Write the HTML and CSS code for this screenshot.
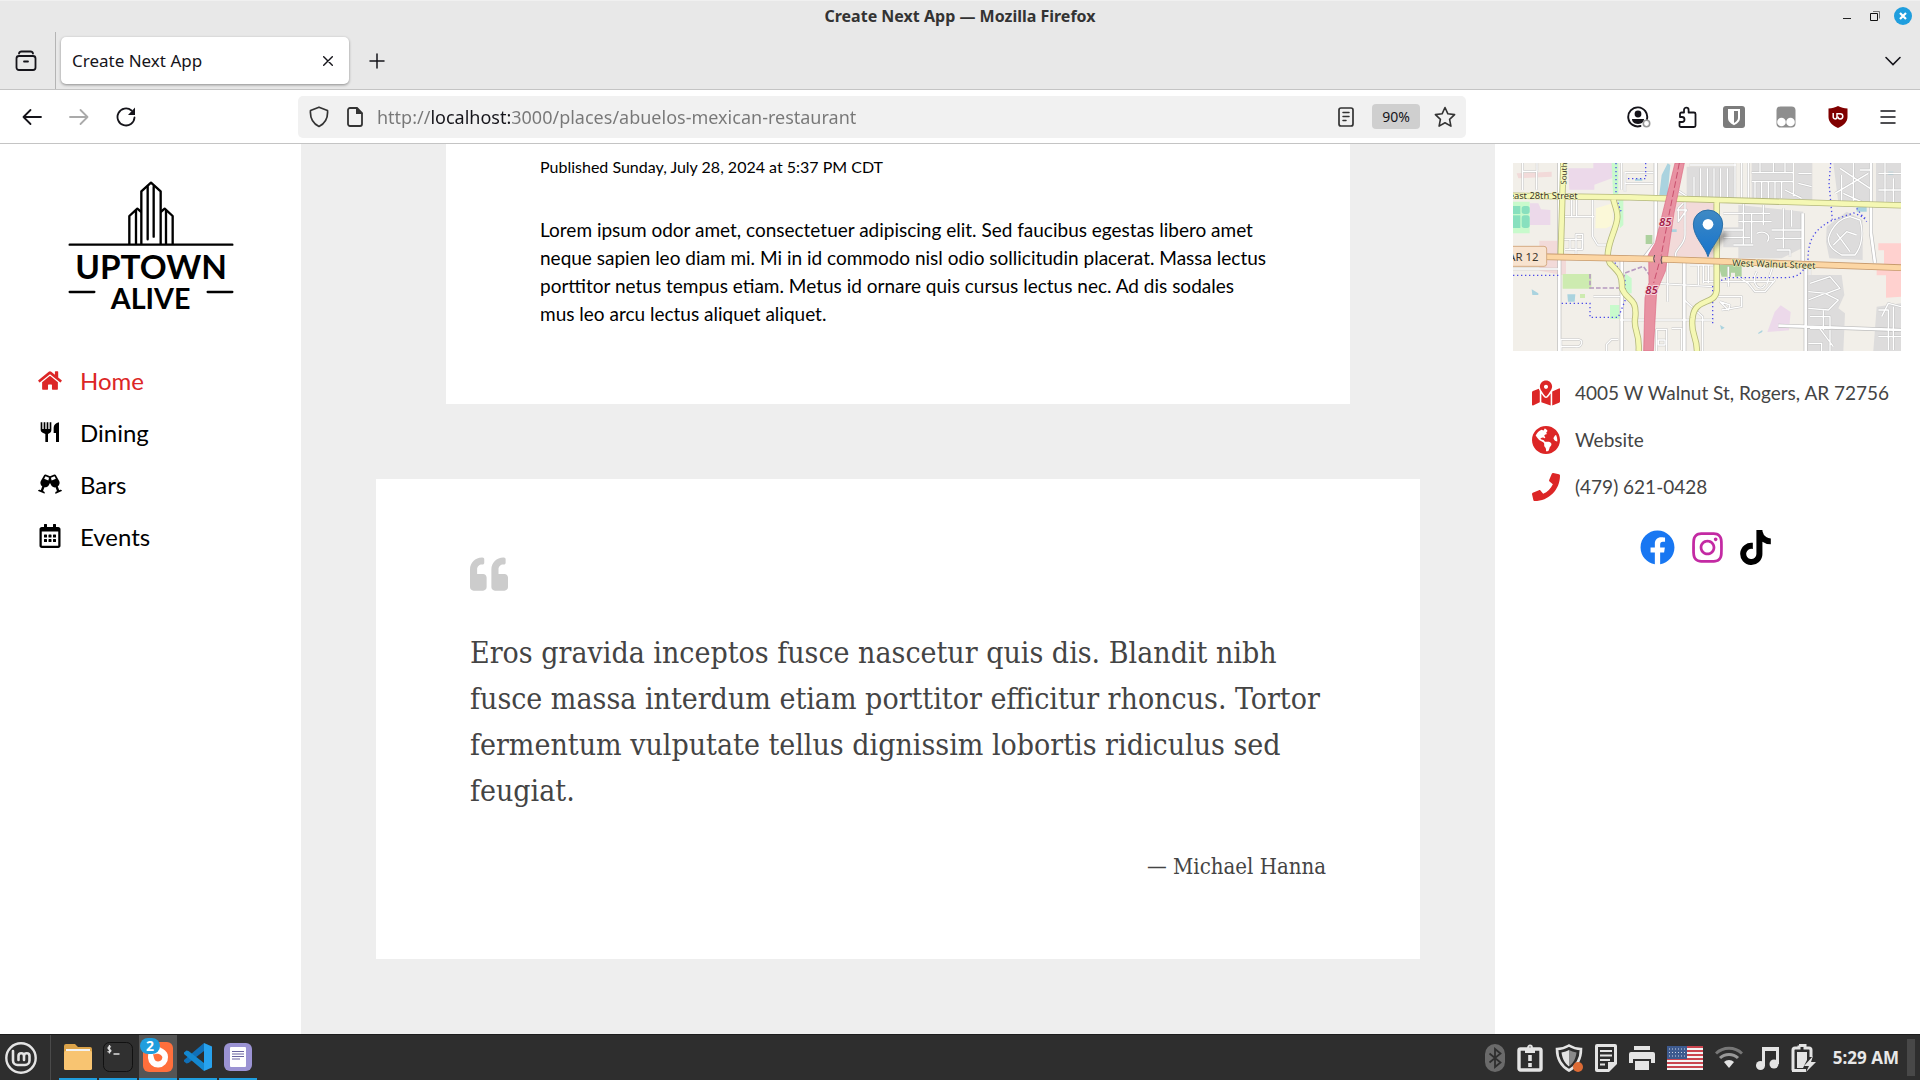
FILE: index.html
```html
<!DOCTYPE html>
<html lang="en">
<head>
<meta charset="utf-8">
<meta name="viewport" content="width=device-width, initial-scale=1">
<title>Create Next App</title>
<link rel="stylesheet" href="styles.css">
</head>
<body>
<header class="chrome">
  <div class="titlebar">
    <span class="titlebar-text">Create Next App — Mozilla Firefox</span>
    <div class="window-buttons">
      <button aria-label="Minimize"><svg width="18" height="18" viewBox="0 0 18 18"><path d="M5 11.500h8" stroke="#222"/></svg></button>
      <button aria-label="Restore"><svg width="18" height="18" viewBox="0 0 18 18" fill="none"><path d="M7 4.500h6.500v7" stroke="#777"/><path d="M4.500 6.500h7v7h-7z" stroke="#111"/></svg></button>
      <button aria-label="Close"><svg width="18" height="18" viewBox="0 0 18 18"><circle cx="9" cy="9" r="9" fill="#1f9ede"/><path d="M6 6l6 6M12 6l-6 6" stroke="#fff" stroke-width="2.200"/></svg></button>
    </div>
  </div>
  <div class="tabbar">
    <button class="recent" aria-label="Recent browsing"><svg width="22" height="22" viewBox="0 0 22 22" fill="none" stroke="#15141a" stroke-width="1.800" stroke-linecap="round"><rect x="1.500" y="6" width="19" height="14" rx="2.500"/><path d="M4 3.500c.3-1.500 1-2 2.500-2h9c1.500 0 2.200.5 2.500 2M9 11.500h4"/></svg></button>
    <div class="tab">
      <span>Create Next App</span>
      <button aria-label="Close tab"><svg width="10" height="10" viewBox="0 0 10 10"><path d="M.7.7l8.600 8.600M9.300.7L.7 9.300" stroke="#15141a" stroke-width="1.400" stroke-linecap="round"/></svg></button>
    </div>
    <button class="new-tab" aria-label="New tab"><svg width="16" height="16" viewBox="0 0 16 16"><path d="M8 1v14M1 8h14" stroke="#15141a" stroke-width="1.500" stroke-linecap="round"/></svg></button>
    <button class="all-tabs" aria-label="List all tabs"><svg width="18" height="10" viewBox="0 0 18 10" fill="none"><path d="M2 1.500l7 7 7-7" stroke="#15141a" stroke-width="1.600" stroke-linecap="round"/></svg></button>
  </div>
  <div class="toolbar">
    <div class="history">
      <button aria-label="Back"><svg width="20" height="18" viewBox="0 0 20 18" fill="none" stroke="#15141a" stroke-width="1.800" stroke-linecap="round" stroke-linejoin="round"><path d="M19 9H1.500M8.500 2l-7 7 7 7"/></svg></button>
      <button aria-label="Forward" disabled><svg width="20" height="18" viewBox="0 0 20 18" fill="none" stroke="#aaa" stroke-width="1.800" stroke-linecap="round" stroke-linejoin="round"><path d="M1 9h17.500M11.500 2l7 7-7 7"/></svg></button>
      <button aria-label="Reload"><svg width="20" height="20" viewBox="0 0 20 20" fill="none"><path d="M18.500 10.500a8.500 8.500 0 1 1-3-7" stroke="#15141a" stroke-width="1.800" stroke-linecap="round"/><path d="M19 .5v7.500h-7z" fill="#15141a"/></svg></button>
    </div>
    <div class="urlbar">
      <svg width="20" height="22" viewBox="0 0 20 22" fill="none"><path d="M10 1.200l8.500 3.300c.5 6-1.500 12.500-8.500 16C3 17 1 10.500 1.500 4.500z" stroke="#333" stroke-width="1.700" stroke-linejoin="round"/></svg>
      <svg width="16" height="20" viewBox="0 0 16 20"><path d="M3 1h7l5 5v11a2 2 0 0 1-2 2H3a2 2 0 0 1-2-2V3a2 2 0 0 1 2-2z" fill="none" stroke="#333" stroke-width="1.800"/><path d="M9 0l7 7H9z" fill="#333"/></svg>
      <input class="url" type="text" aria-label="Address" value="http://localhost:3000/places/abuelos-mexican-restaurant">
      <button aria-label="Reader view"><svg width="16" height="20" viewBox="0 0 16 20" fill="none" stroke="#333" stroke-linecap="round"><rect x="1" y="1" width="14" height="18" rx="2" stroke-width="1.700"/><path d="M5 5.500h6M5 9.500h6M5 13.500h3" stroke-width="1.500"/></svg></button>
      <button class="zoom-level">90%</button>
      <button aria-label="Bookmark this page"><svg width="22" height="22" viewBox="0 0 22 22" fill="none"><path d="M11 1.500l2.900 6.300 6.700.8-5 4.700 1.300 6.800-5.900-3.400-5.900 3.400 1.300-6.800-5-4.700 6.700-.8z" stroke="#333" stroke-width="1.600" stroke-linejoin="round"/></svg></button>
    </div>
    <div class="extensions">
      <div class="toolbar-group">
        <button aria-label="Account"><svg width="24" height="22" viewBox="0 0 24 22"><path d="M13.500 20A9.500 9.500 0 1 1 20 13" fill="none" stroke="#15141a" stroke-width="1.900" stroke-linecap="round"/><circle cx="11" cy="8" r="3.400" fill="#15141a"/><path d="M5 13h12c0 2-1.500 5-6 5s-6-3-6-5z" fill="#15141a"/><circle cx="19.500" cy="17.500" r="3.200" fill="#fff" stroke="#999" stroke-width="1.600"/></svg></button>
        <button aria-label="Extensions"><svg width="20" height="22" viewBox="0 0 20 22" fill="none"><path d="M4.500 6.500H7V4a2.300 2.300 0 0 1 4.600 0v2.500H17a1.500 1.500 0 0 1 1.500 1.500v11.500A1.500 1.500 0 0 1 17 21H4a1.500 1.500 0 0 1-1.500-1.500V16H5a2 2 0 0 0 0-5H3V8a1.500 1.500 0 0 1 1.500-1.500z" stroke="#15141a" stroke-width="1.800" stroke-linejoin="round"/></svg></button>
        <button aria-label="Bitwarden"><svg width="22" height="22" viewBox="0 0 22 22"><rect width="22" height="22" rx="3" fill="#7c7c7c"/><path d="M5 3h12v9c0 3.500-3 5.700-6 7.200C8 17.700 5 15.500 5 12z" fill="#fff"/><path d="M11 5h4v7c0 2.200-1.800 3.700-4 5z" fill="#7c7c7c"/></svg></button>
      </div>
      <div class="toolbar-group addons">
        <button aria-label="Tampermonkey"><svg width="20" height="22" viewBox="0 0 20 22"><rect x=".5" y=".5" width="19" height="21" rx="4" fill="#8e8e8e"/><circle cx="5.500" cy="16" r="4.300" fill="#fff"/><circle cx="14.500" cy="16" r="4.300" fill="#fff"/></svg></button>
        <button aria-label="uBlock Origin"><svg width="20" height="22" viewBox="0 0 20 22"><path d="M10 0c3 1.800 6 2.300 9.500 2.500V11c0 5-4 8.500-9.500 11C4.500 19.500.5 16 .5 11V2.500C4 2.300 7 1.800 10 0z" fill="#800000"/><path d="M5.200 7v4a1.900 1.900 0 0 0 3.800 0V7" fill="none" stroke="#fff" stroke-width="1.500"/><path d="M9 7.700h3.200a2.600 2.600 0 0 1 0 5.200c-1.600 0-2.300-1-2.300-2.400" fill="none" stroke="#fff" stroke-width="1.500"/></svg></button>
        <button aria-label="Menu"><svg width="16" height="14" viewBox="0 0 16 14"><path d="M1 1h14M1 7h14M1 13h14" stroke="#15141a" stroke-width="1.500" stroke-linecap="round"/></svg></button>
      </div>
    </div>
  </div>
</header>

<div class="page">
  <aside class="sidebar">
    <svg class="logo" viewBox="80 60 504 390" role="img" aria-label="Uptown Alive">
      <g fill="none" stroke="#000" stroke-width="7" stroke-linejoin="round">
        <path d="M303 252V94l29-26 29 26v158"/>
        <path d="M322 80v158M340 80v150" stroke-linecap="round"/>
        <path d="M303 156l-12-10-24 22v84M287 152v100M361 156l12-10 24 22v84M377 152v100"/>
        <path d="M88 254h488M88 396h74M502 396h74" stroke-linecap="round"/>
      </g>
      <text class="logo-name" x="332" y="357" text-anchor="middle">UPTOWN</text>
      <text class="logo-sub" x="331" y="446" text-anchor="middle">ALIVE</text>
    </svg>
    <nav class="menu">
      <a class="active" href="#home"><svg width="24" height="21" viewBox="0 0 576 512"><path d="M280.370 148.260L96 300.110V464a16 16 0 0 0 16 16l112.060-.29a16 16 0 0 0 15.920-16V368a16 16 0 0 1 16-16h64a16 16 0 0 1 16 16v95.640a16 16 0 0 0 16 16.050L464 480a16 16 0 0 0 16-16V300L295.670 148.260a12.190 12.190 0 0 0-15.300 0zM571.600 251.470L488 182.560V44.050a12 12 0 0 0-12-12h-56a12 12 0 0 0-12 12v72.610L318.470 43a48 48 0 0 0-61 0L4.340 251.470a12 12 0 0 0-1.600 16.900l25.500 31A12 12 0 0 0 45.150 301l235.220-193.740a12.190 12.190 0 0 1 15.300 0L530.900 301a12 12 0 0 0 16.900-1.600l25.500-31a12 12 0 0 0-1.700-16.930z"/></svg>Home</a>
      <a href="#dining"><svg width="24" height="20" viewBox="114 221 72 60"><path d="M122 222h5v20h4v-20h5v20h4v-20h5v20h4v-20h5v24c0 6-4 9-10 11v23c0 2-8 2-8 0v-23c-6-2-14-5-14-11zM177 222v58c0 2-9 2-9 0v-26h-7v-16c0-8 6-14 16-16z"/></svg>Dining</a>
      <a href="#bars"><svg width="24" height="20" viewBox="0 0 640 512"><path d="M639.400 433.600c-8.400-20.400-31.800-30.100-52.200-21.600l-22.100 9.200-38.700-101.900c47.900-35 64.800-100.300 34.500-152.800L474.300 16c-8-13.900-25.100-19.700-40-13.600L320 49.800 205.700 2.400c-14.900-6.100-32-.3-40 13.600L79.100 166.500C48.900 219 65.700 284.300 113.600 319.200L74.900 421.100l-22.100-9.200c-20.400-8.500-43.700 1.200-52.200 21.600-1.700 4.100.2 8.800 4.300 10.500l162.300 67.400c4.100 1.700 8.700-.2 10.400-4.300 8.400-20.400-1.200-43.900-21.600-52.500l-22.100-9.200 38.700-101.800c5.100.4 10.100.7 15.100.7 40.400 0 78.700-20.600 99.300-56.300L320 232.200l33.200 57.500c20.600 35.700 59 56.300 99.300 56.300 5 0 10.100-.2 15.100-.7l38.700 101.800-22.100 9.200c-20.400 8.500-30.100 32-21.600 52.500 1.700 4.100 6.400 6 10.400 4.300L635.100 444c4-1.700 6-6.400 4.300-10.400zM275.900 162.100l-112.100-46.500 36.500-63.400 94.500 39.200-18.900 70.700zm88.200 0l-18.900-70.700 94.500-39.200 36.500 63.400-112.100 46.500z"/></svg>Bars</a>
      <a href="#events"><svg width="24" height="24" viewBox="0 0 448 512"><path d="M148 288h-40c-6.600 0-12-5.400-12-12v-40c0-6.600 5.400-12 12-12h40c6.600 0 12 5.400 12 12v40c0 6.600-5.400 12-12 12zm108-12v-40c0-6.600-5.400-12-12-12h-40c-6.600 0-12 5.400-12 12v40c0 6.600 5.400 12 12 12h40c6.600 0 12-5.400 12-12zm96 0v-40c0-6.600-5.400-12-12-12h-40c-6.600 0-12 5.400-12 12v40c0 6.600 5.400 12 12 12h40c6.600 0 12-5.400 12-12zm-96 96v-40c0-6.600-5.400-12-12-12h-40c-6.600 0-12 5.400-12 12v40c0 6.600 5.400 12 12 12h40c6.600 0 12-5.400 12-12zm-96 0v-40c0-6.600-5.400-12-12-12h-40c-6.600 0-12 5.400-12 12v40c0 6.600 5.400 12 12 12h40c6.600 0 12-5.400 12-12zm192 0v-40c0-6.600-5.400-12-12-12h-40c-6.600 0-12 5.400-12 12v40c0 6.600 5.400 12 12 12h40c6.600 0 12-5.400 12-12zm96-260v352c0 26.500-21.500 48-48 48H48c-26.500 0-48-21.500-48-48V112c0-26.500 21.500-48 48-48h48V12c0-6.600 5.400-12 12-12h40c6.600 0 12 5.400 12 12v52h128V12c0-6.600 5.400-12 12-12h40c6.600 0 12 5.400 12 12v52h48c26.500 0 48 21.500 48 48zm-48 346V160H48v298c0 3.300 2.700 6 6 6h340c3.300 0 6-2.700 6-6z"/></svg>Events</a>
    </nav>
  </aside>

  <main class="content">
    <article class="article">
      <p class="published">Published Sunday, July 28, 2024 at 5:37 PM CDT</p>
      <p>Lorem ipsum odor amet, consectetuer adipiscing elit. Sed faucibus egestas libero amet neque sapien leo diam mi. Mi in id commodo nisl odio sollicitudin placerat. Massa lectus porttitor netus tempus etiam. Metus id ornare quis cursus lectus nec. Ad dis sodales mus leo arcu lectus aliquet aliquet.</p>
    </article>
    <figure class="quote">
      <svg width="38" height="38" viewBox="0 0 512 512" fill="#ccc"><path d="M464 256h-80v-64c0-35.300 28.700-64 64-64h8c13.300 0 24-10.700 24-24V56c0-13.300-10.700-24-24-24h-8c-88.400 0-160 71.600-160 160v240c0 26.500 21.500 48 48 48h128c26.500 0 48-21.500 48-48V304c0-26.500-21.500-48-48-48zm-288 0H96v-64c0-35.300 28.700-64 64-64h8c13.300 0 24-10.700 24-24V56c0-13.300-10.700-24-24-24h-8C71.600 32 0 103.600 0 192v240c0 26.500 21.500 48 48 48h128c26.500 0 48-21.500 48-48V304c0-26.500-21.500-48-48-48z"/></svg>
      <blockquote>Eros gravida inceptos fusce nascetur quis dis. Blandit nibh fusce massa interdum etiam porttitor efficitur rhoncus. Tortor fermentum vulputate tellus dignissim lobortis ridiculus sed feugiat.</blockquote>
      <figcaption>— Michael Hanna</figcaption>
    </figure>
  </main>

  <aside class="details">
    <svg class="map" viewBox="69 39 1164 564" role="img" aria-label="Map of West Walnut Street">
      <defs>
        <linearGradient id="pin" x1="0" y1="0" x2="0" y2="1"><stop offset="0" stop-color="#3f8ac4"/><stop offset="1" stop-color="#1673cc"/></linearGradient>
        <filter id="soft" x="-50%" y="-50%" width="200%" height="200%"><feGaussianBlur stdDeviation="8"/></filter>
        <path id="lanes" d="M98 39v25M98 120V64h43V39M140 64v55M69 357h140M245 145v55M260 145v55M218 200h95M308 145v115l15 25h30M222 268h55v30h-52M240 300v-30M258 318v-65h20v30M395 39v80M405 68h85M405 100h85M405 125v-60M213 603v-35h50c20 0 14 25-8 22h-40M350 603v-20l15-15h20M612 140V80M632 140V55M652 142V55M672 142V55M692 143V55M712 143V55M598 45h140M735 39v105M755 39v106M775 39v106M795 95v52M815 95v52M835 95v52M855 95v52M875 95v50M785 95h125M785 68h125M810 39v30M850 39v30M885 39v30M910 39v100M925 70h40M925 100l40 10M885 120l50 25M1050 55l90 60M1055 75v80M1090 39v115M1110 60h35M1035 130l100-60M1060 130l60 28M1165 70h68M1185 39v120M1210 85v75M1165 120h68M760 160v125M700 190h140M745 215h100M785 190v90M820 165v60M880 175v120M905 180v50M845 240h90M855 265h80M700 240h60M700 262h80M730 285h60M800 250c25-10 45 5 32 25M860 300h40v20M1015 265c10-35 35-60 65-65l30 10c12 40 5 80-15 105h-40c-25-15-40-25-40-50zM1040 250l40 55M1030 285l40-40 30 10M692 395h160M715 350v60M745 380l30 20 20 25h30l30-35M800 365c-20 35 10 65 25 40M850 345l-20 60M960 345v30M960 400l60-20 30 35-40 15-55-5M955 450l50-20 40 20-30 30-60-5M960 500h60v35h-60M1000 480v60M1175 500l20-40 38 10M1165 480h30v120M1210 470v130M1165 560h68M955 580h40v23M1030 590l-45-60M690 455l25 25 5-15-30-10M685 440h70v30l-60 10M640 395h35M600 345h70M625 345v60M640 345v55M655 345v55M560 180h30l-25 35v-40l15-15M562 120l30 20M560 325c-15-25 25-35 25-70V150M500 400l168 10M583 450l55 50v103M533 320v135M500 603v-65h30v65M545 535h30v65M310 440h80M505 570h20v15h-20zM1020 540v63M390 510h280"/>
        <path id="collectors" d="M208 603V39M497 39v240l-35 45-35 5M395 330v273M583 325v278M947 340v263M865 527l368 13M1143 39v210l12 90M938 190v145"/>
        <path id="secondary" d="M212 320l8-281M69 137l350 5 814 24M370 148c12 45 20 45 0 100-20 55-20 75-10 92 25 25 38 35 36 75 15 40 45 25 40 85-8 45 14 40 10 103M680 152v270c-5 45-65 20-72 80-8 50 12 50 13 101"/>
      </defs>
      <rect x="69" y="39" width="1164" height="564" fill="#f2efe9"/>
      <!-- land use -->
      <g fill="#dddcdc">
        <path d="M590 50h145v100l-145-8zM785 39h125v110H785zM915 39h52v120h-80v-15l28-20zM1030 39h115v120h-100zM1158 39h75v120h-75zM745 165l195 20-5 110-60 30H745zM700 232h90v60h-90zM1010 230l60-45 48 25v120l-100-5-10-50z"/>
        <path d="M950 375h105l8 60-18 40 20 15-5 113H945zM1160 470l73-10v143h-83z"/>
      </g>
      <g fill="#ecd9ea"><path d="M235 55h75v-16h58v45l-55 20v15h-75zM120 160h25l8 18 28 2v45h-61zM872 466l30 20-5 55-65 5 22-60z"/></g>
      <g fill="#f2dad9"><path d="M560 150l115 5-5 168-145-5zM148 272h60v45h20v60l-80-15zM80 70l105-5v15l-100 5z"/></g>
      <path d="M1165 280h68v160l-45 3v-67h-28v-35h22v-40h-17z" fill="#ffd1cf"/>
      <path d="M69 155h50v95H69zM365 39h20v105l-15 5zM385 150h15v75l-10 10zM405 370l20 15v45h-20zM360 465h28v42h-28z" fill="#c8facc"/>
      <g fill="#88e0be"><rect x="69" y="168" width="22" height="24"/><rect x="95" y="168" width="24" height="24" rx="8"/><rect x="69" y="196" width="22" height="38"/><rect x="95" y="196" width="24" height="38" rx="8"/></g>
      <path d="M318 175l50-15v65l-20 10h-32z" fill="#fbf8d8"/>
      <path d="M218 372h86v44h-86zM270 432h15v12h-15z" fill="#cdebb0"/>
      <path d="M685 345h70v35h-20v-12h-12v12h-28zM467 255h20v27h-20z" fill="#add19e"/>
      <path d="M515 75l18-35 8 5-8 90h-25zM232 433h24l-2 22h-20zM125 418l20 12v5h-18zM538 238h22v8h-22zM690 525l14 8-10 6zM805 548l12-8v6l-12 6zM1195 65h15v10h-15zM1100 170h30v15h-30zM435 86h22v6h-22z" fill="#aad3df"/>
      <!-- residential streets -->
      <g fill="none" stroke-linejoin="round">
        <use href="#lanes" stroke="#c4c4c4" stroke-width="7"/>
        <use href="#collectors" stroke="#bdbdbd" stroke-width="12"/>
        <use href="#lanes" stroke="#fff" stroke-width="4"/>
        <use href="#collectors" stroke="#fff" stroke-width="8"/>
      </g>
      <!-- cycle and foot paths -->
      <g fill="none" stroke="#4c4ce8" stroke-width="4" stroke-dasharray="4 8"><path d="M378 39v105l15 40M467 39v47h-55M69 376h138M215 460h85v42h85l20-50v-60l-45-80M682 395l35-12h165c60 0 60-30 72-55 0-70 30-95 72-117l65-22 35 15M1022 39l-5 60 10 110M668 520V400M1100 175l30 40"/></g>
      <path d="M300 372v42h90l15-45 55-20 25 35" fill="none" stroke="#b79ac0" stroke-width="5" stroke-dasharray="14 6"/>
      <!-- secondary roads -->
      <g fill="none" stroke-linejoin="round">
        <use href="#secondary" stroke="#b4b87c" stroke-width="19"/>
        <use href="#secondary" stroke="#f5f8b4" stroke-width="14"/>
      </g>
      <!-- motorway and highway -->
      <path d="M555 39h28l-31 150-26 175-26 60-10 179h-29l4-160 12-45-1-85 20-35z" fill="#e892a2" stroke="#dc6a84" stroke-width="2"/>
      <path d="M568 39l-30 150-25 130-22 80" fill="none" stroke="#c9506e" stroke-width="3" stroke-dasharray="20 8"/>
      <g fill="none"><path d="M150 320l340 7 743 26" stroke="#c79a6c" stroke-width="20"/><path d="M150 320l340 7 743 26" stroke="#fcd6a4" stroke-width="15"/><path d="M490 327l27 1" stroke="#e892a2" stroke-width="22"/><path d="M494 315q-6 10 0 22M516 318q-6 12 0 24" stroke="#555" stroke-width="3"/></g>
      <rect x="40" y="289" width="130" height="60" rx="8" fill="#f8e3cf" stroke="#d5ab84" stroke-width="3"/>
      <g class="map-labels">
        <text class="map-shield" x="55" y="332">AR 12</text>
        <text x="56" y="146">east 28th Street</text>
        <text x="726" y="348" transform="rotate(2 726 348)">West Walnut Street</text>
        <text class="map-side" x="229" y="104" transform="rotate(-88 229 104)">South</text>
        <text class="map-route" x="507" y="228">85</text>
        <text class="map-route" x="466" y="433">85</text>
      </g>
      <!-- marker -->
      <path d="M655 318l35-75 25 10z" fill="#333" opacity=".5" filter="url(#soft)"/>
      <path d="M654 320c-8-30-44-58-44-98a44 42 0 0 1 88 0c0 40-36 68-44 98z" fill="url(#pin)" stroke="#2a6fa8" stroke-width="3"/>
      <circle cx="654" cy="223" r="16" fill="#fff"/>
    </svg>
    <ul class="contacts">
      <li><svg width="28" height="26" viewBox="0 0 576 512"><path d="M288 0c-69.590 0-126 56.410-126 126 0 56.260 82.350 158.800 113.900 196.020 6.390 7.540 17.820 7.540 24.200 0C331.650 284.800 414 182.260 414 126 414 56.410 357.590 0 288 0zm0 168c-23.200 0-42-18.800-42-42s18.800-42 42-42 42 18.800 42 42-18.800 42-42 42zM20.120 215.950A32.006 32.006 0 0 0 0 245.660v250.320c0 11.320 11.430 19.060 21.940 14.860L160 448V214.920c-8.840-15.980-16.070-31.540-21.250-46.420L20.120 215.950zM288 359.670c-14.070 0-27.380-6.180-36.510-16.960-19.660-23.200-40.570-49.620-59.490-76.720v182l192 64V266c-18.920 27.090-39.820 53.520-59.490 76.720-9.130 10.770-22.440 16.950-36.510 16.950zm266.060-198.510L416 224v288l139.880-55.950A31.996 31.996 0 0 0 576 426.340V176.020c0-11.320-11.430-19.060-21.940-14.860z"/></svg><span>4005 W Walnut St, Rogers, AR 72756</span></li>
      <li><svg width="28" height="28" viewBox="0 8 496 496"><path d="M248 8C111.030 8 0 119.030 0 256s111.030 248 248 248 248-111.030 248-248S384.970 8 248 8zm82.290 357.600c-3.900 3.880-7.990 7.950-11.310 11.280-2.990 3-5.100 6.700-6.170 10.710-1.510 5.660-2.730 11.380-4.770 16.870l-17.390 46.850c-13.760 3-28 4.690-42.650 4.690v-27.380c1.690-12.620-7.640-36.260-22.630-51.250-6-6-9.370-14.140-9.370-22.630v-32.010c0-11.640-6.270-22.340-16.460-27.970-14.370-7.950-34.810-19.060-48.810-26.110-11.480-5.780-22.100-13.140-31.650-21.750l-.8-.72a114.792 114.792 0 0 1-18.060-20.740c-9.380-13.770-24.660-36.420-34.590-51.140 20.470-45.500 57.360-82.040 103.200-101.890l24.010 12.010C203.480 89.740 216 82.010 216 70.110v-11.300c7.990-1.290 16.120-2.110 24.390-2.420l28.300 28.300c6.250 6.250 6.250 16.380 0 22.630L264 112l-10.340 10.340c-3.120 3.120-3.120 8.190 0 11.310l4.690 4.690c3.120 3.120 3.120 8.190 0 11.310l-8 8a8.008 8.008 0 0 1-5.660 2.340h-8.990c-2.080 0-4.080.81-5.580 2.270l-9.920 9.650a8.008 8.008 0 0 0-1.580 9.310l15.590 31.190c2.660 5.320-1.210 11.580-7.150 11.580h-5.640c-1.930 0-3.790-.7-5.240-1.960l-9.280-8.060a16.017 16.017 0 0 0-15.550-3.100l-31.170 10.390a11.950 11.950 0 0 0-8.170 11.340c0 4.530 2.560 8.660 6.610 10.690l11.080 5.540c9.410 4.710 19.790 7.160 30.310 7.160s22.590 27.290 32 32h66.750c8.490 0 16.620 3.370 22.630 9.370l13.690 13.690a30.503 30.503 0 0 1 8.930 21.570 46.536 46.536 0 0 1-13.720 32.980zM417 274.250c-5.790-1.450-10.840-5-14.150-9.970l-17.980-26.970a23.970 23.970 0 0 1 0-26.620l19.590-29.380c2.320-3.470 5.500-6.290 9.240-8.150l12.980-6.490C440.200 193.590 448 223.870 448 256c0 8.670-.74 17.160-1.820 25.540L417 274.250z"/></svg><a href="#website">Website</a></li>
      <li><svg width="28" height="28" viewBox="0 0 512 512"><path d="M493.400 24.600l-104-24c-11.300-2.600-22.900 3.300-27.500 13.900l-48 112c-4.200 9.800-1.400 21.300 6.900 28l60.600 49.600c-36 76.700-98.900 140.500-177.200 177.200l-49.600-60.600c-6.800-8.300-18.200-11.100-28-6.900l-112 48C3.900 366.500-2 378.100.6 389.400l24 104C27.100 504.200 36.700 512 48 512c256.100 0 464-207.500 464-464 0-11.200-7.700-20.900-18.600-23.400z"/></svg><a href="tel:4796210428">(479) 621-0428</a></li>
    </ul>
    <div class="social">
      <a href="#facebook" aria-label="Facebook"><svg width="35" height="35" viewBox="0 0 512 512" fill="#1877f2"><path d="M504 256C504 119 393 8 256 8S8 119 8 256c0 123.780 90.690 226.380 209.250 245V327.690h-63V256h63v-54.640c0-62.150 37-96.480 93.670-96.480 27.140 0 55.520 4.840 55.520 4.840v61h-31.280c-30.800 0-40.410 19.120-40.410 38.730V256h68.780l-11 71.690h-57.780V501C413.310 482.380 504 379.780 504 256z"/></svg></a>
      <a href="#instagram" aria-label="Instagram"><svg width="31" height="35" viewBox="0 0 448 512" fill="#c32aa3"><path d="M224.100 141c-63.600 0-114.900 51.300-114.900 114.900s51.300 114.900 114.900 114.900S339 319.500 339 255.900 287.700 141 224.100 141zm0 189.600c-41.100 0-74.700-33.500-74.700-74.700s33.500-74.700 74.700-74.700 74.700 33.500 74.700 74.700-33.600 74.700-74.700 74.700zm146.400-194.300c0 14.900-12 26.800-26.800 26.800-14.900 0-26.800-12-26.800-26.800s12-26.800 26.800-26.800 26.800 12 26.800 26.800zm76.100 27.200c-1.700-35.900-9.900-67.700-36.200-93.900-26.200-26.200-58-34.400-93.900-36.200-37-2.100-147.900-2.100-184.900 0-35.800 1.700-67.600 9.900-93.900 36.100s-34.400 58-36.200 93.900c-2.100 37-2.100 147.900 0 184.900 1.700 35.900 9.900 67.700 36.200 93.900s58 34.400 93.900 36.200c37 2.100 147.900 2.100 184.900 0 35.900-1.700 67.700-9.900 93.900-36.200 26.200-26.200 34.400-58 36.200-93.900 2.100-37 2.100-147.800 0-184.800zM398.800 388c-7.800 19.600-22.900 34.700-42.600 42.600-29.500 11.700-99.500 9-132.100 9s-102.700 2.600-132.100-9c-19.600-7.800-34.700-22.900-42.600-42.600-11.700-29.500-9-99.500-9-132.100s-2.600-102.700 9-132.100c7.800-19.600 22.900-34.700 42.600-42.600 29.500-11.700 99.500-9 132.100-9s102.700-2.600 132.100 9c19.600 7.800 34.700 22.900 42.600 42.600 11.700 29.500 9 99.500 9 132.100s2.700 102.700-9 132.100z"/></svg></a>
      <a href="#tiktok" aria-label="TikTok"><svg width="31" height="35" viewBox="0 0 448 512"><path d="M448 209.910a210.060 210.060 0 0 1-122.770-39.250V349.380A162.550 162.550 0 1 1 185 188.310V278.200a74.620 74.620 0 1 0 52.230 71.180V0h88a121.180 121.180 0 0 0 1.860 22.170A122.180 122.180 0 0 0 381 102.390a121.430 121.430 0 0 0 67 20.140z"/></svg></a>
    </div>
  </aside>
</div>

<footer class="taskbar">
  <button class="start" aria-label="Menu"><svg width="32" height="32" viewBox="0 0 32 32" fill="none" stroke="#e4e4e4" stroke-linecap="round" stroke-linejoin="round"><circle cx="16" cy="16" r="14.700" stroke-width="2.400"/><path d="M8 9v9.500a4.500 4.500 0 0 0 4.500 4.500h7.500a4.500 4.500 0 0 0 4.500-4.500V14a2.700 2.700 0 0 0-5.500 0v4M19 14a2.700 2.700 0 0 0-5.500 0v4" stroke-width="2.600"/></svg></button>
  <div class="tasks">
    <button aria-label="Files"><svg width="28" height="26" viewBox="0 0 28 26"><path d="M0 2a2 2 0 0 1 2-2h9l3 3h12a2 2 0 0 1 2 2v18H0z" fill="#dba34a"/><path d="M2 5h24v4H2z" fill="#f2f2f2"/><rect y="7" width="28" height="19" rx="1.500" fill="#f8c471"/></svg></button>
    <button aria-label="Terminal"><svg width="30" height="30" viewBox="0 0 30 30"><rect x=".5" y=".5" width="29" height="29" rx="6" fill="#303030" stroke="#111"/><path d="M8 5c-3-1.500-4 2-1.500 2.500S8 11 4.500 9.500M6.500 3v8.500M10.500 12h6" fill="none" stroke="#ddd" stroke-width="1.300"/></svg></button>
    <button class="current" aria-label="Firefox"><svg width="30" height="30" viewBox="0 0 30 30"><rect width="30" height="30" rx="6" fill="#ff6f3c"/><path d="M11 7c1-2 3-3 5-4 0 2 2 3 4 4 3 2 5 4 5 8a10 10 0 0 1-20 1c0-3 0-5 2-8l1 2z" fill="#fff"/><path d="M10 12c2 1 3-1 6 0 3 1 4 3 3 5-1 3-7 4-8-1z" fill="#ff6f3c"/></svg><span class="badge">2</span></button>
    <button aria-label="Visual Studio Code"><svg width="28" height="28" viewBox="0 0 28 28"><path d="M20 0v8L4.500 20 2.500 20.500 0 18.500V17z" fill="#1070b8"/><path d="M20 28v-8L4.500 8 2.500 7.500 0 9.500V11z" fill="#1488d0"/><path d="M20 0l8 3.500v21L20 28z" fill="#27a2ee"/></svg></button>
    <button aria-label="Text Editor"><svg width="28" height="28" viewBox="0 0 28 28"><rect width="28" height="28" rx="6" fill="#9b93d3"/><rect x="6" y="4" width="16" height="20" rx="1" fill="#fff"/><path d="M8 8.500h12M8 11h12M8 13.500h12M8 16h8" stroke="#6a65a0"/></svg></button>
  </div>
  <div class="tray">
    <svg width="20" height="28" viewBox="0 0 20 28"><rect width="20" height="28" rx="10" fill="#6a6a6a"/><path d="M4.500 9.500l11 9L10 23V5l5.500 4.500-11 9" fill="none" stroke="#2e2e2e" stroke-width="1.800"/></svg>
    <svg width="26" height="28" viewBox="0 0 26 28" fill="none" stroke="#e4e4e4"><rect x="2" y="5" width="22" height="21" rx="1.500" stroke-width="3.400"/><path d="M8 7h10" stroke-width="4"/><circle cx="13" cy="3.500" r="2" stroke-width="1.800"/><path d="M13 11v6M13 19v4" stroke-width="3.600"/></svg>
    <svg width="28" height="28" viewBox="0 0 28 28"><path d="M14 1.500c4 2.500 8 3.500 12 3.500 0 10-4 17-12 21.500C6 22 2 15 2 5c4 0 8-1 12-3.500z" fill="none" stroke="#e4e4e4" stroke-width="2.600"/><path d="M14 6v16.500c-4-3-6.500-7-7.500-14C9.500 8 12 7 14 6z" fill="#e4e4e4"/><path d="M14 6v16.500c4-3 6.500-7 7.500-14C18.500 8 16 7 14 6z" fill="#8a8a8a"/><circle cx="23" cy="23" r="5" fill="#dd6b35"/></svg>
    <svg width="22" height="28" viewBox="0 0 22 28"><path d="M2 0h18a2 2 0 0 1 2 2v18l-8 8H2a2 2 0 0 1-2-2V2a2 2 0 0 1 2-2z" fill="#e4e4e4"/><path d="M3 3h16v15h-6v7H3z" fill="#2e2e2e"/><path d="M5 7h12M5 11.500h12M5 16h10M5 20.500h5" stroke="#e4e4e4" stroke-width="2"/></svg>
    <svg width="26" height="24" viewBox="0 0 26 24" fill="#e4e4e4"><path d="M5 0h16v4H5zM2 6h22a2 2 0 0 1 2 2v9h-4v-4H4v4H0V8a2 2 0 0 1 2-2zM6 15h14v9H6z"/></svg>
    <svg width="36" height="24" viewBox="0 0 36 24"><rect width="36" height="24" fill="#f4f4f4"/><path d="M0 1h36M0 5h36M0 9h36M0 13h36M0 17h36M0 21h36" stroke="#c9444e" stroke-width="2"/><rect width="20" height="13" fill="#3d5a8f"/><path d="M2 3h17M2 6.500h17M2 10h17" stroke="#cdd5e4" stroke-dasharray="1 2"/></svg>
    <svg width="28" height="24" viewBox="0 0 28 24" fill="none"><path d="M1 7.500a19 19 0 0 1 26 0" stroke="#777" stroke-width="3"/><path d="M5 12a13 13 0 0 1 18 0" stroke="#999" stroke-width="3"/><path d="M9 16a7 7 0 0 1 10 0l-5 6z" fill="#e4e4e4"/></svg>
    <svg width="24" height="24" viewBox="0 0 24 24" fill="#e4e4e4"><path d="M7 1h17v4H10v15H7z"/><path d="M21 1h3v17h-3z"/><circle cx="5.500" cy="19.500" r="4.500"/><circle cx="19" cy="18" r="4.500"/></svg>
    <svg width="26" height="28" viewBox="0 0 26 28"><path d="M8 1.500h6V4h4a2 2 0 0 1 2 2v7M2 26.500V6a2 2 0 0 1 2-2h4V1.500M1 26.500h14" fill="none" stroke="#e4e4e4" stroke-width="3"/><path d="M6 8h10v8l-4 8H6z" fill="#e4e4e4"/><path d="M22 12l-9 10h5l-3 6 10-10h-5z" fill="#e4e4e4"/></svg>
  </div>
  <div class="clock">
    <time>5:29 AM</time>
    <button class="show-desktop" aria-label="Show desktop"></button>
  </div>
</footer>
</body>
</html>
```
FILE: styles.css
```css
* { box-sizing: border-box; margin: 0; padding: 0; }

body {
  display: flex;
  flex-direction: column;
  min-height: 100vh;
  background: #fff;
  color: #000;
  font-family: "Lato", sans-serif;
}

button {
  display: flex;
  align-items: center;
  justify-content: center;
  border: 0;
  background: none;
  font: inherit;
  color: inherit;
}

a { color: inherit; text-decoration: none; }
svg { display: block; flex: none; }

/* browser window */
.chrome { color: #15141a; font: 17px/24px "Noto Sans", sans-serif; }

.titlebar {
  display: grid;
  grid-template-columns: 1fr auto 1fr;
  align-items: center;
  height: 32px;
  background: #e8e8e8;
  border-top: 1px solid #f0f0f0;
}
.titlebar-text { grid-column: 2; color: #333; font-size: 16px; line-height: 20px; padding-bottom: 2px; font-weight: 700; }
.window-buttons { display: flex; justify-content: flex-end; gap: 10px; padding: 0 8px 1px 0; }

.tabbar {
  display: flex;
  align-items: center;
  height: 58px;
  background: #e8e8e8;
  border-bottom: 1px solid #c4c4c4;
}
.recent { align-self: stretch; width: 56px; border-right: 1px solid #b4b4b4; padding-right: 3px; }
.tab {
  display: flex;
  align-items: center;
  justify-content: space-between;
  width: 288px;
  height: 47px;
  margin-left: 5px;
  padding: 0 16px 0 11px;
  border-radius: 5px;
  background: #fff;
  box-shadow: 0 1px 3px #0006;
}
.new-tab { margin-left: 20px; }
.all-tabs { margin-left: auto; margin-right: 18px; }

.toolbar {
  display: flex;
  align-items: center;
  height: 54px;
  background: #fff;
  border-bottom: 1px solid #c4c4c4;
}
.history { display: flex; gap: 27px; width: 298px; padding-left: 22px; }
.urlbar {
  display: flex;
  align-items: center;
  flex: 1;
  height: 42px;
  padding: 0 10px 0 11px;
  border-radius: 5px;
  background: #f1f1f1;
  gap: 18px;
}
.urlbar > button:last-child { margin-left: -4px; }
.url {
  flex: 1;
  min-width: 0;
  margin-left: -4px;
  border: 0;
  outline: 0;
  font: 18px/24px "Noto Sans", sans-serif;
  color: #777;
  -webkit-text-fill-color: transparent;
  background: linear-gradient(90deg, #777 55px, #15141a 55px, #15141a 133px, #777 133px);
  background-clip: text;
  -webkit-background-clip: text;
}
.zoom-level { width: 48px; height: 25px; border-radius: 4px; background: #cfcfcf; font-size: 14px; }
.extensions {
  display: flex;
  justify-content: space-between;
  align-items: center;
  width: 454px;
  padding: 0 24px 0 161px;
}
.toolbar-group { display: flex; align-items: center; gap: 26px; }
.addons { gap: 32px; }

/* site */
.page {
  flex: 1;
  display: grid;
  grid-template-columns: 301px minmax(0, 1fr) 425px;
}

.sidebar { padding-top: 36px; }
.logo { width: 168px; height: 130px; margin: 0 auto 44px; overflow: visible; }
.logo-name { font-size: 100px; font-weight: 700; }
.logo-sub { font-size: 86px; font-weight: 700; }
.menu a {
  display: flex;
  align-items: center;
  gap: 18px;
  height: 52px;
  padding-left: 38px;
  font-size: 24px;
}
.menu .active { color: #dc2626; }
.menu svg { fill: currentColor; }

.content {
  display: flex;
  flex-direction: column;
  align-items: center;
  gap: 75px;
  padding: 0 75px 75px;
  background: #eee;
}
.article {
  width: 100%;
  max-width: 904px;
  padding: 9px 78px 76px 94px;
  background: #fff;
  font-size: 19px;
  line-height: 28px;
}
.published { margin-bottom: 35px; font-size: 16px; }

.quote {
  width: 100%;
  padding: 76px 94px;
  background: #fff;
  color: #444;
  font-family: "DejaVu Serif Condensed", "DejaVu Serif", serif;
}
.quote blockquote { margin: 37px 0; font-size: 30px; line-height: 46px; }
.quote figcaption { font-size: 22px; line-height: 32px; text-align: right; }

.details { padding: 19px 19px 0 18px; color: #444; }
.map { width: 100%; height: auto; }
.map-labels { font: 28px "Noto Sans", sans-serif; fill: #3c362c; stroke: #f7fabf; stroke-width: 3px; paint-order: stroke; }
.map-side { font-size: 24px; }
.map-shield { font-size: 34px; stroke: none; }
.map-route { font-size: 34px; font-weight: 600; font-style: italic; fill: #a5204a; stroke: #f6d5dc; stroke-width: 6px; }
.contacts { margin-top: 18px; padding-left: 19px; list-style: none; font-size: 19px; }
.contacts li { display: flex; align-items: center; gap: 15px; height: 47px; }
.contacts svg { fill: #dc2626; }
.social { display: flex; justify-content: center; gap: 17px; margin-top: 20px; padding-right: 3px; }

/* desktop panel */
.taskbar {
  display: flex;
  height: 46px;
  background: #2e2e2e;
  border-top: 1px solid #1c1c1c;
  color: #e8e8e8;
}
.start { width: 51px; padding-right: 9px; border-right: 1px solid #4a4a4a; }
.tasks { display: flex; gap: 2px; margin-left: 8px; }
.tasks button { position: relative; width: 38px; border-bottom: 2px solid #1f9ede; }
.tasks .current { background: #555; }
.badge {
  position: absolute;
  top: 3px;
  left: 1px;
  width: 20px;
  height: 16px;
  border-radius: 8px;
  background: #1f9ede;
  color: #fff;
  font: 700 14px/16px "Noto Sans", sans-serif;
}
.tray { display: flex; align-items: center; gap: 12px; margin-left: auto; }
.clock { display: flex; align-items: center; gap: 8px; padding: 0 5px 0 16px; font: 700 17px/24px "Noto Sans", sans-serif; }
.show-desktop { width: 8px; height: 37px; background: #484848; }
```
